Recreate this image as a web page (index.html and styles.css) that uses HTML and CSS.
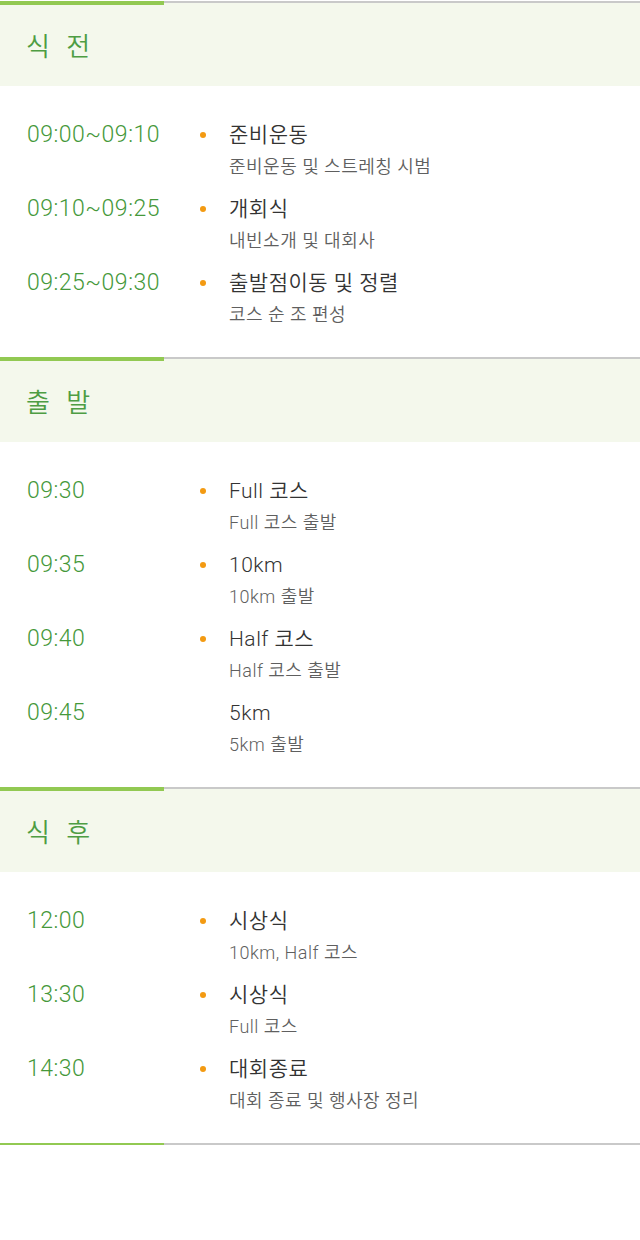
FILE: index.html
```html
<!DOCTYPE html>
<html lang="ko">
<head>
  <meta charset="UTF-8" />
  <meta name="viewport" content="width=device-width, initial-scale=1.0"/>
  <title>대회 일정</title>
  <link rel="stylesheet" href="styles.css">
</head>
<body>
  <div class="schedule">

    <div class="section">
      <div class="section-head"><h2>식 전</h2></div>
      <div class="rows">
        <div class="row">
          <div class="time">09:00~09:10</div>
          <span class="dot"></span>
          <div class="desc">
            <div class="what">준비운동</div>
            <div class="note">준비운동 및 스트레칭 시범</div>
          </div>
        </div>
        <div class="row">
          <div class="time">09:10~09:25</div>
          <span class="dot"></span>
          <div class="desc">
            <div class="what">개회식</div>
            <div class="note">내빈소개 및 대회사</div>
          </div>
        </div>
        <div class="row">
          <div class="time">09:25~09:30</div>
          <span class="dot"></span>
          <div class="desc">
            <div class="what">출발점이동 및 정렬</div>
            <div class="note">코스 순 조 편성</div>
          </div>
        </div>
      </div>
    </div>

    <div class="section">
      <div class="section-head"><h2>출 발</h2></div>
      <div class="rows">
        <div class="row">
          <div class="time">09:30</div>
          <span class="dot"></span>
          <div class="desc">
            <div class="what">Full 코스</div>
            <div class="note">Full 코스 출발</div>
          </div>
        </div>
        <div class="row">
          <div class="time">09:35</div>
          <span class="dot"></span>
          <div class="desc">
            <div class="what">10km</div>
            <div class="note">10km 출발</div>
          </div>
        </div>
        <div class="row">
          <div class="time">09:40</div>
          <span class="dot"></span>
          <div class="desc">
            <div class="what">Half 코스</div>
            <div class="note">Half 코스 출발</div>
          </div>
        </div>
        <div class="row">
          <div class="time">09:45</div>
          <span></span>
          <div class="desc">
            <div class="what">5km</div>
            <div class="note">5km 출발</div>
          </div>
        </div>
      </div>
    </div>

    <div class="section">
      <div class="section-head"><h2>식 후</h2></div>
      <div class="rows">
        <div class="row">
          <div class="time">12:00</div>
          <span class="dot"></span>
          <div class="desc">
            <div class="what">시상식</div>
            <div class="note">10km, Half 코스</div>
          </div>
        </div>
        <div class="row">
          <div class="time">13:30</div>
          <span class="dot"></span>
          <div class="desc">
            <div class="what">시상식</div>
            <div class="note">Full 코스</div>
          </div>
        </div>
        <div class="row">
          <div class="time">14:30</div>
          <span class="dot"></span>
          <div class="desc">
            <div class="what">대회종료</div>
            <div class="note">대회 종료 및 행사장 정리</div>
          </div>
        </div>
      </div>
    </div>

    <div class="section end"></div>
  </div>
</body>
</html>
```

FILE: styles.css
```css
body {
  margin: 0;
  background: #fff;
  font-family: Roboto, "Noto Sans CJK KR", sans-serif;
  font-weight: 350;
  color: #333;
}
.schedule {
  padding-top: 1px;
}
.section {
  position: relative;
  border-top: 2px solid #c9c9c9;
}
/* green accent over the left part of each divider */
.section::before {
  content: '';
  position: absolute;
  left: 0;
  top: -2px;
  width: 164px;
  height: 4px;
  background: #92c952;
}
.section-head {
  height: 83px;
  background: #f4f8ec;
  display: flex;
  align-items: center;
  padding-left: 26px;
}
.section-head h2 {
  margin: 0;
  font-size: 26px;
  font-weight: 350;
  letter-spacing: 5px;
  color: #4e9d43;
}
.rows {
  display: flex;
  flex-direction: column;
  gap: 14px;
  padding: 35px 0 28px;
}
.row {
  display: grid;
  grid-template-columns: 173px 29px 1fr;
  padding-left: 27px;
}
.time {
  font-size: 23px;
  font-weight: 300;
  line-height: 28px;
  letter-spacing: 0.5px;
  color: #45983a;
}
.dot {
  width: 6px;
  height: 6px;
  margin-top: 11px;
  border-radius: 50%;
  background: #f39a12;
}
.what {
  font-size: 21px;
  line-height: 28px;
  letter-spacing: 0.5px;
  color: #333;
}
.note {
  margin-top: 4px;
  font-size: 18px;
  line-height: 28px;
  letter-spacing: 0.5px;
  color: #5f5f5f;
}
```
